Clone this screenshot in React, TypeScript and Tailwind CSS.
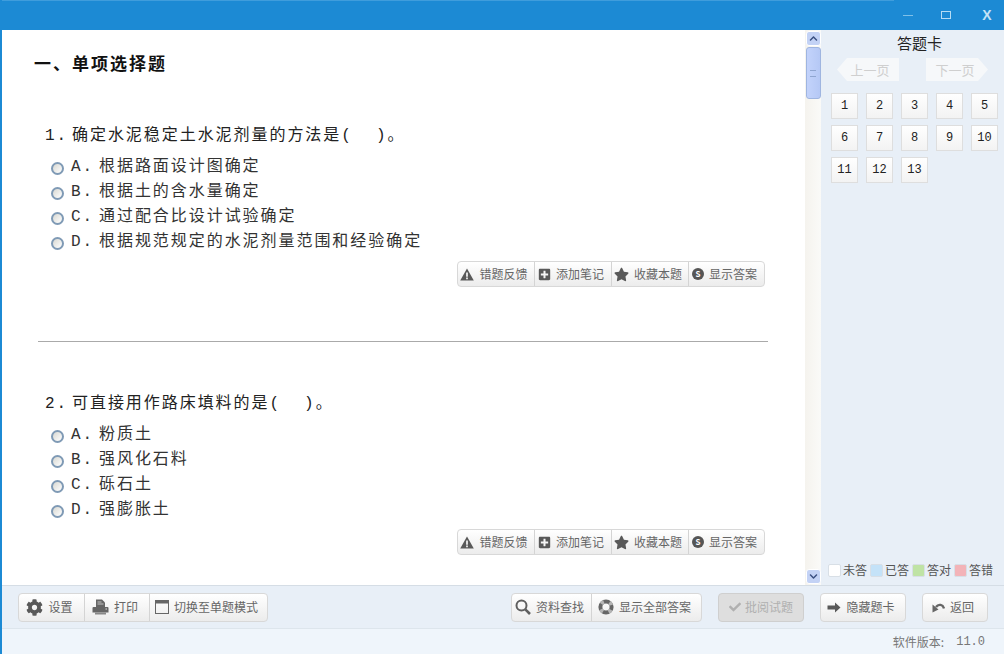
import type { ReactNode } from "react";
import { FaCheck, FaChevronDown, FaChevronUp, FaCog, FaPlusSquare, FaStar } from "react-icons/fa";

const mono = "font-['Liberation_Mono','Noto_Sans_CJK_SC',monospace]";
const ui = "font-['Noto_Sans_CJK_SC',sans-serif]";

const questions = [
  {
    num: "1.",
    title: "确定水泥稳定土水泥剂量的方法是(  )。",
    options: [
      ["A.", "根据路面设计图确定"],
      ["B.", "根据土的含水量确定"],
      ["C.", "通过配合比设计试验确定"],
      ["D.", "根据规范规定的水泥剂量范围和经验确定"],
    ],
  },
  {
    num: "2.",
    title: "可直接用作路床填料的是(  )。",
    options: [
      ["A.", "粉质土"],
      ["B.", "强风化石料"],
      ["C.", "砾石土"],
      ["D.", "强膨胀土"],
    ],
  },
];

function WarnIcon() {
  return (
    <svg width="14" height="13" viewBox="0 0 14 13">
      <path d="M7 0.5 13.8 12.5H0.2z" fill="#595959" />
      <path d="M6.2 4.5h1.6v4.2H6.2zM6.2 9.6h1.6v1.6H6.2z" fill="#fff" />
    </svg>
  );
}

function PrintIcon() {
  return (
    <svg width="17" height="16" viewBox="0 0 17 16">
      <path d="M4 0.5h6l3 3V8H4z" fill="#666" />
      <path d="M5.5 3h4M5.5 5h6" stroke="#ddd" strokeWidth="0.8" />
      <path d="M1.5 8h14a1 1 0 0 1 1 1v4.5H0.5V9a1 1 0 0 1 1-1z" fill="#666" />
      <path d="M13.5 10h1.5" stroke="#ddd" strokeWidth="1" />
      <path d="M3 13.5h11V15.5H3z" fill="#888" />
    </svg>
  );
}

function WindowIcon() {
  return (
    <svg width="14" height="14" viewBox="0 0 14 14">
      <rect x="0.5" y="0.5" width="13" height="13" fill="none" stroke="#666" />
      <rect x="0.5" y="0.5" width="13" height="3" fill="#666" />
    </svg>
  );
}

function SearchIcon() {
  return (
    <svg width="16" height="16" viewBox="0 0 16 16">
      <circle cx="6.5" cy="6.5" r="5" fill="none" stroke="#5f5f5f" strokeWidth="2" />
      <path d="M10.3 10.3 15 15" stroke="#5f5f5f" strokeWidth="2.6" />
    </svg>
  );
}

function RingIcon() {
  return (
    <svg width="16" height="16" viewBox="0 0 16 16">
      <circle cx="8" cy="8" r="5.6" fill="none" stroke="#666" strokeWidth="4" />
      <circle cx="8" cy="8" r="5.6" fill="none" stroke="#b5b5b5" strokeWidth="4" strokeDasharray="3 5.8" strokeDashoffset="-2.9" />
    </svg>
  );
}

function ArrowIcon() {
  return (
    <svg width="14" height="11" viewBox="0 0 14 11">
      <path d="M0.5 3.5H8V0.5L13.5 5.5 8 10.5V7.5H0.5z" fill="#595959" />
    </svg>
  );
}

function UndoIcon() {
  return (
    <svg width="13" height="12" viewBox="0 0 13 12">
      <path d="M12 7.5C11 3.5 6.5 2.5 4 6" fill="none" stroke="#666" strokeWidth="2.4" />
      <path d="M0.5 3.5 6.5 8.5 0.5 11.5z" fill="#666" />
    </svg>
  );
}

function SIcon() {
  return (
    <span className="flex items-center justify-center w-[12px] h-[12px] rounded-full bg-[#555] text-white text-[8px] font-bold leading-none">
      S
    </span>
  );
}

function GroupButton({
  icon,
  label,
  first,
  className,
}: {
  icon: ReactNode;
  label: string;
  first?: boolean;
  className?: string;
}) {
  return (
    <div
      className={`flex items-center justify-center gap-[5px] pr-[4px] h-full text-[12px] text-[#666] ${
        first ? "" : "border-l border-[#d4d4d4]"
      } ${className}`}
    >
      <span className="text-[#595959] text-[13px]">{icon}</span>
      <span>{label}</span>
    </div>
  );
}

function BtnGroup({ children, className }: { children: ReactNode; className?: string }) {
  return (
    <div
      className={`flex items-center rounded-[4px] border border-[#d8d8d8] bg-gradient-to-b from-white to-[#ececec] ${ui} ${className}`}
    >
      {children}
    </div>
  );
}

function Question({ num, title, options }: { num: string; title: string; options: string[][] }) {
  return (
    <div className="flex flex-col">
      <div className={`flex pl-[43px] h-[25px] leading-[25px] text-[16px] tracking-[1.95px] text-[#222] whitespace-pre ${mono}`}>
        <span className="w-[27px]">{num}</span>
        <span>{title}</span>
      </div>
      <div className="mt-[5px] flex flex-col pl-[49px]">
        {options.map(([key, text]) => (
          <div key={key} className="flex items-center h-[25px]">
            <span className="w-[13px] h-[13px] mt-[3px] rounded-full border-2 border-[#7f9ab5] bg-gradient-to-br from-[#d8d8d2] to-white" />
            <span className={`ml-[7px] w-[28px] text-[16px] tracking-[2px] text-[#333] ${mono}`}>{key}</span>
            <span className={`text-[16px] tracking-[1.95px] text-[#333] whitespace-pre ${mono}`}>{text}</span>
          </div>
        ))}
      </div>
      <div className="flex justify-end pr-[40px] mt-[7px]">
        <BtnGroup className="h-[26px]">
          <GroupButton first className="w-[76px]" icon={<WarnIcon />} label="错题反馈" />
          <GroupButton className="w-[77px]" icon={<FaPlusSquare />} label="添加笔记" />
          <GroupButton className="w-[77px]" icon={<FaStar className="text-[15px]" />} label="收藏本题" />
          <GroupButton className="w-[76px]" icon={<SIcon />} label="显示答案" />
        </BtnGroup>
      </div>
    </div>
  );
}

function Legend({ color, label }: { color: string; label: string }) {
  return (
    <div className="flex items-center gap-[2px]">
      <span className={`w-[13px] h-[13px] rounded-[2px] border border-[#d8dfe6] ${color}`} />
      <span className="text-[12px] text-[#555]">{label}</span>
    </div>
  );
}

export default function App() {
  const nums = Array.from({ length: 13 }, (_, i) => i + 1);
  return (
    <div className={`w-[1004px] h-[654px] flex flex-col overflow-hidden bg-[#e8eff7] border-l-2 border-[#1c8ad4] ${ui}`}>
      {/* title bar */}
      <div className="h-[30px] -ml-[2px] shrink-0 bg-[#1c8ad4] flex items-center">
        <div className="flex-1 h-full border-t border-[#3f9ddc]" />
        <div className="w-[28px] flex justify-center">
          <span className="w-[10px] h-[1px] bg-[#7fc0e8]" />
        </div>
        <div className="w-[48px] flex justify-center">
          <span className="w-[10px] h-[8px] border border-[#b5dcf4]" />
        </div>
        <div className="w-[34px] flex justify-center text-[14px] font-bold text-[#c4e3f6] font-['Liberation_Sans',sans-serif]">X</div>
      </div>

      <div className="flex flex-1 min-h-0">
        {/* questions */}
        <div className="w-[803px] bg-white flex flex-col">
          <h1 className={`pl-[32px] pt-[21px] h-[94px] text-[17px] leading-[24px] font-bold tracking-[2px] text-[#111] ${ui}`}>
            一、单项选择题
          </h1>
          <Question {...questions[0]} />
          <div className="ml-[36px] mr-[37px] mt-[54px] mb-[50px] h-[1px] bg-[#aaa]" />
          <Question {...questions[1]} />
        </div>

        {/* scrollbar */}
        <div className="w-[16px] bg-gradient-to-r from-[#f5f3ee] to-[#fafaf8] flex flex-col items-center justify-between py-[1px]">
          <div className="flex flex-col w-[15px]">
            <div className="h-[15px] rounded-[3px] bg-[#c3d2f5] border border-white flex items-center justify-center text-[#3a4f80] text-[9px]">
              <FaChevronUp />
            </div>
            <div className="h-[52px] mt-[1px] rounded-[3px] bg-gradient-to-r from-[#c3d3fb] to-[#b5c8f5] border border-[#9fb5e0] flex items-center justify-center">
              <span className="w-[6px] h-[7px] border-y border-[#8fa5d0]" />
            </div>
          </div>
          <div className="h-[15px] w-[15px] rounded-[3px] bg-[#c3d2f5] border border-white flex items-center justify-center text-[#3a4f80] text-[9px]">
            <FaChevronDown />
          </div>
        </div>

        {/* answer card */}
        <div className="flex-1 flex flex-col">
          <div className="text-center pt-[3px] pl-[14px] text-[15px] leading-[20px] text-[#222]">答题卡</div>
          <div className="flex justify-between pl-[16px] pr-[16px] mt-[5px]">
            <div className="w-[62px] h-[23px] bg-[#f6f8fa] flex items-center justify-center pl-[4px] text-[13px] text-[#cfcfcf] [clip-path:polygon(10px_0,100%_0,100%_100%,10px_100%,0_50%)]">
              上一页
            </div>
            <div className="w-[62px] h-[23px] bg-[#f6f8fa] flex items-center justify-center pr-[4px] text-[13px] text-[#cfcfcf] [clip-path:polygon(0_0,calc(100%-10px)_0,100%_50%,calc(100%-10px)_100%,0_100%)]">
              下一页
            </div>
          </div>
          <div className="grid grid-cols-[repeat(5,27px)] gap-x-[8px] gap-y-[6px] pl-[10px] mt-[12px]">
            {nums.map((n) => (
              <div
                key={n}
                className="h-[26px] flex items-center justify-center bg-gradient-to-b from-white to-[#f3f3f3] border border-[#dedede] text-[12px] text-[#222] font-['Liberation_Mono',monospace]"
              >
                {n}
              </div>
            ))}
          </div>
          <div className="mt-auto mb-[6px] pl-[7px] flex gap-[3px]">
            <Legend color="bg-white" label="未答" />
            <Legend color="bg-[#c4e2f8]" label="已答" />
            <Legend color="bg-[#bfe3a5]" label="答对" />
            <Legend color="bg-[#f3b3b8]" label="答错" />
          </div>
        </div>
      </div>

      {/* toolbar */}
      <div className="h-[43px] shrink-0 border-t border-[#d5dde5] flex items-center pl-[16px]">
        <BtnGroup className="h-[29px]">
          <GroupButton first className="w-[65px]" icon={<FaCog className="text-[17px]" />} label="设置" />
          <GroupButton className="w-[65px]" icon={<PrintIcon />} label="打印" />
          <GroupButton className="w-[118px]" icon={<WindowIcon />} label="切换至单题模式" />
        </BtnGroup>
        <BtnGroup className="h-[29px] ml-[243px]">
          <GroupButton first className="w-[79px]" icon={<SearchIcon />} label="资料查找" />
          <GroupButton className="w-[110px]" icon={<RingIcon />} label="显示全部答案" />
        </BtnGroup>
        <div className="h-[29px] ml-[16px] w-[86px] flex items-center justify-center gap-1 rounded-[4px] border border-[#cfcfcf] bg-[#dedede] text-[12px] text-[#b0b0b0]">
          <FaCheck className="text-[12px]" />
          批阅试题
        </div>
        <BtnGroup className="h-[29px] ml-[16px] w-[86px]">
          <GroupButton first className="w-full" icon={<ArrowIcon />} label="隐藏题卡" />
        </BtnGroup>
        <BtnGroup className="h-[29px] ml-[16px] w-[66px]">
          <GroupButton first className="w-full" icon={<UndoIcon />} label="返回" />
        </BtnGroup>
      </div>

      {/* status */}
      <div className="h-[26px] shrink-0 border-t border-[#dde5ec] bg-[#eff5fb] flex items-center justify-end pr-[19px] text-[12px] text-[#777]">
        软件版本:<span className="ml-[12px] font-['Liberation_Mono',monospace]">11.0</span>
      </div>
    </div>
  );
}
